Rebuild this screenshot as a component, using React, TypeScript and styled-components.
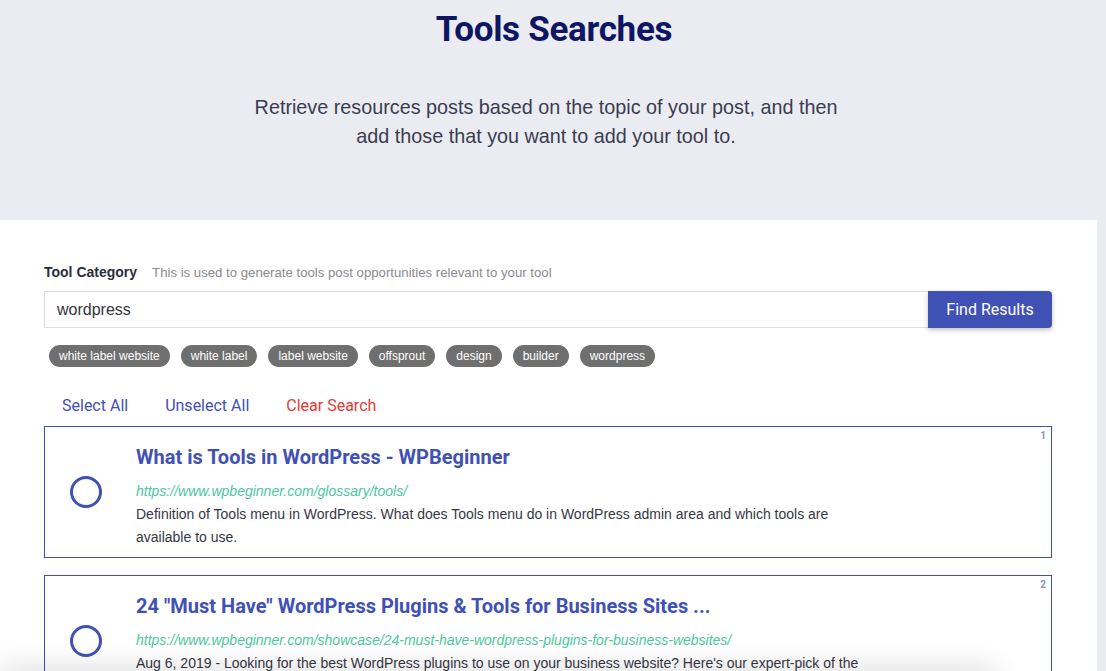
import * as React from 'react';
import styled, { createGlobalStyle } from 'styled-components';

const GlobalStyle = createGlobalStyle`
  html, body {
    margin: 0;
    padding: 0;
    background: #ebecf1;
    font-family: "Liberation Sans", Arial, sans-serif;
    overflow: hidden;
  }
`;

const Page = styled.div`
  min-height: 100vh;
  background: #ebecf1;
`;

const Hero = styled.header`
  height: 220px;
  box-sizing: border-box;
  padding-top: 10px;
  display: flex;
  flex-direction: column;
  align-items: center;
`;

const Title = styled.h1`
  margin: 0 0 0 2px;
  font-family: Roboto, sans-serif;
  font-weight: 700;
  font-size: 35px;
  line-height: 40px;
  color: #0e1663;
  letter-spacing: -0.3px;
`;

const Lead = styled.p`
  margin: 43px 0 0 -14px;
  font-size: 19.8px;
  line-height: 29px;
  color: #3a3c52;
  text-align: center;
  width: 612px;
`;

const Panel = styled.main`
  background: #fff;
  margin-right: 9px;
  padding: 44px 45px 0 44px;
  min-height: 460px;
`;

const FieldHead = styled.div`
  display: flex;
  align-items: baseline;
  gap: 15px;
  margin-bottom: 11px;
`;

const Label = styled.span`
  font-size: 14px;
  font-weight: 700;
  color: #2c2d3a;
`;

const Hint = styled.span`
  font-size: 13.2px;
  color: #8a8a90;
`;

const SearchRow = styled.div`
  display: flex;
  height: 37px;
`;

const Input = styled.input`
  flex: 1;
  border: 1px solid #dedede;
  border-right: none;
  padding: 0 12px;
  font-family: "Liberation Sans", Arial, sans-serif;
  font-size: 16px;
  color: #33343d;
  outline: none;
`;

const FindButton = styled.button`
  width: 124px;
  border: none;
  border-radius: 0 4px 4px 0;
  background: #3f51b5;
  color: #fff;
  font-family: Roboto, sans-serif;
  font-size: 16px;
  box-shadow: 0 2px 5px rgba(0, 0, 0, 0.25);
  cursor: pointer;
`;

const Chips = styled.div`
  display: flex;
  gap: 11px;
  margin: 17px 0 0 5px;
`;

const Chip = styled.span`
  height: 22px;
  line-height: 22px;
  padding: 0 10px;
  border-radius: 11px;
  background: #6f6f6f;
  color: #fff;
  font-size: 12px;
`;

const Actions = styled.div`
  display: flex;
  gap: 37px;
  margin: 30px 0 11px 18px;
`;

const ActionLink = styled.a<{ $danger?: boolean }>`
  font-family: Roboto, sans-serif;
  font-size: 16px;
  line-height: 18px;
  color: ${(p) => (p.$danger ? '#e53935' : '#3f51b5')};
  cursor: pointer;
`;

const Results = styled.div`
  display: flex;
  flex-direction: column;
  gap: 17px;
`;

const Card = styled.article`
  position: relative;
  display: flex;
  border: 1px solid #3f51b5;
  padding: 17px 0 8px 0;
`;

const Rank = styled.span`
  position: absolute;
  top: 3px;
  right: 5px;
  font-family: Roboto, sans-serif;
  font-size: 10px;
  font-weight: 700;
  color: #8791c7;
`;

const Check = styled.div`
  width: 91px;
  box-sizing: border-box;
  padding: 32px 0 0 25px;
`;

const Circle = styled.span`
  display: block;
  width: 26px;
  height: 26px;
  border: 3px solid #3f51b5;
  border-radius: 50%;
`;

const Body = styled.div`
  flex: 1;
  min-width: 0;
`;

const ResultTitle = styled.h2`
  margin: 0 0 12px;
  font-family: Roboto, sans-serif;
  font-weight: 700;
  font-size: 20px;
  line-height: 26px;
  color: #3f51b5;
`;

const Url = styled.div`
  font-size: 14px;
  font-style: italic;
  line-height: 18px;
  color: #4cc7a2;
`;

const Snippet = styled.p`
  margin: 3px 0 0;
  max-width: 745px;
  font-size: 14px;
  line-height: 23px;
  color: #363744;
`;

const BottomShade = styled.div`
  position: fixed;
  left: 0;
  right: 110px;
  bottom: -20px;
  height: 20px;
  pointer-events: none;
  background: #fff;
  box-shadow: 0 -2px 28px rgba(0, 0, 0, 0.16);
`;

const tags = ['white label website', 'white label', 'label website', 'offsprout', 'design', 'builder', 'wordpress'];

const results = [
  {
    title: 'What is Tools in WordPress - WPBeginner',
    url: 'https://www.wpbeginner.com/glossary/tools/',
    text: 'Definition of Tools menu in WordPress. What does Tools menu do in WordPress admin area and which tools are available to use.',
  },
  {
    title: '24 "Must Have" WordPress Plugins & Tools for Business Sites ...',
    url: 'https://www.wpbeginner.com/showcase/24-must-have-wordpress-plugins-for-business-websites/',
    text: "Aug 6, 2019 - Looking for the best WordPress plugins to use on your business website? Here's our expert-pick of the must have WordPress plugins for business websites.",
  },
];

export default function App() {
  return (
    <Page>
      <GlobalStyle />
      <Hero>
        <Title>Tools Searches</Title>
        <Lead>
          Retrieve resources posts based on the topic of your post, and then add those that you want to add your tool to.
        </Lead>
      </Hero>
      <Panel>
        <FieldHead>
          <Label>Tool Category</Label>
          <Hint>This is used to generate tools post opportunities relevant to your tool</Hint>
        </FieldHead>
        <SearchRow>
          <Input defaultValue="wordpress" />
          <FindButton>Find Results</FindButton>
        </SearchRow>
        <Chips>
          {tags.map((t) => (
            <Chip key={t}>{t}</Chip>
          ))}
        </Chips>
        <Actions>
          <ActionLink>Select All</ActionLink>
          <ActionLink>Unselect All</ActionLink>
          <ActionLink $danger>Clear Search</ActionLink>
        </Actions>
        <Results>
          {results.map((r, i) => (
            <Card key={r.url}>
              <Rank>{i + 1}</Rank>
              <Check>
                <Circle />
              </Check>
              <Body>
                <ResultTitle>{r.title}</ResultTitle>
                <Url>{r.url}</Url>
                <Snippet>{r.text}</Snippet>
              </Body>
            </Card>
          ))}
        </Results>
      </Panel>
      <BottomShade />
    </Page>
  );
}
